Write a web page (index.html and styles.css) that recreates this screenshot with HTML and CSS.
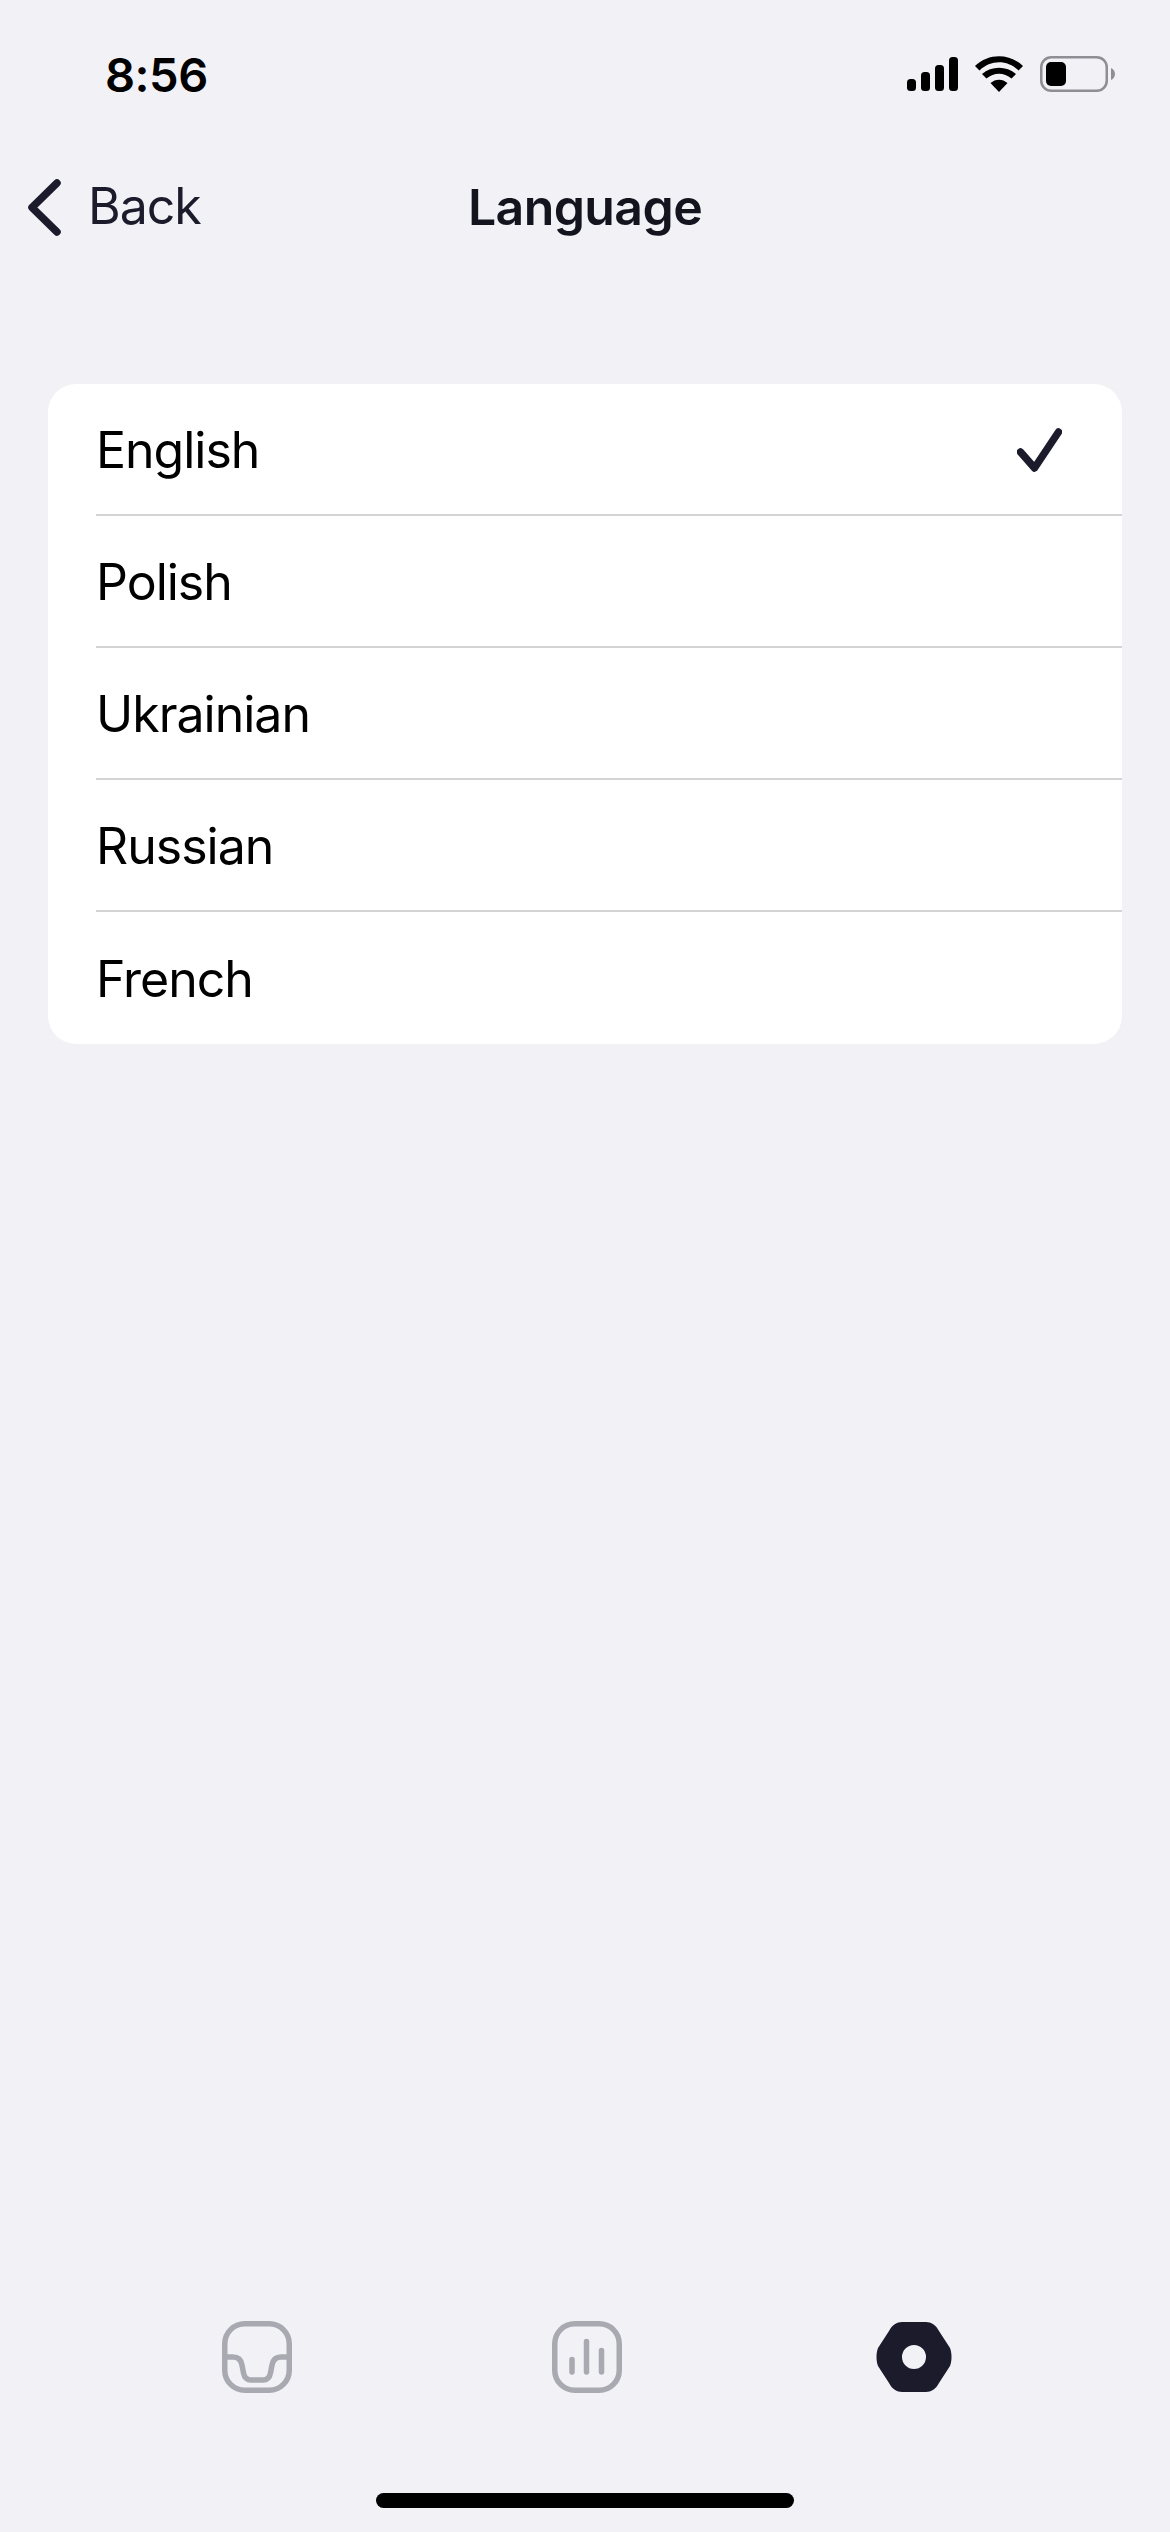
FILE: index.html
```html
<!DOCTYPE html>
<html lang="en">

<head>
    <meta charset="UTF-8" />
    <meta name="viewport" content="width=device-width, initial-scale=1.0" />
    <title>Language</title>
    <link rel="stylesheet" href="styles.css">
</head>

<body>
    <div class="screen">
        <div class="status-bar">
            <span class="time">8:56</span>
            <div class="status-icons">
                <svg class="signal" width="51" height="34" viewBox="0 0 51 34">
                    <rect x="0" y="22" width="9" height="12" rx="3.500" />
                    <rect x="14" y="15" width="9" height="19" rx="3.500" />
                    <rect x="28" y="8" width="9" height="26" rx="3.500" />
                    <rect x="42" y="0" width="9" height="34" rx="3.500" />
                </svg>
                <svg class="wifi" width="48" height="36" viewBox="0 0 48 36">
                    <path d="M24 36 L15.500 27 C20.500 22.500 27.500 22.500 32.500 27 Z" />
                    <path d="M11.500 22.500 L7 18 C16.500 9.500 31.500 9.500 41 18 L36.500 22.500 C29 16 19 16 11.500 22.500 Z" />
                    <path d="M4.500 14.500 L0 10 C13.500 -3 34.500 -3 48 10 L43.500 14.500 C32.500 3.500 15.500 3.500 4.500 14.500 Z" />
                </svg>
                <svg class="battery" width="75" height="36" viewBox="0 0 75 36">
                    <rect x="1.250" y="1.250" width="65.500" height="33.500" rx="10" fill="none" stroke="#8e8e93" stroke-width="2.500" />
                    <rect x="6" y="6" width="20" height="24" rx="5" />
                    <path d="M71 12 C73.500 13 75 15.500 75 18 C75 20.500 73.500 23 71 24 Z" fill="#8e8e93" />
                </svg>
            </div>
        </div>

        <nav class="nav-bar">
            <a class="back" href="#">
                <svg width="33" height="57" viewBox="0 0 33 57">
                    <path d="M29 4 L4 28.500 L29 53" fill="none" stroke="#1b1b2b" stroke-width="7.500" stroke-linecap="round" stroke-linejoin="round" />
                </svg>
                <span>Back</span>
            </a>
            <h1>Language</h1>
        </nav>

        <ul class="lang-list">
            <li class="lang-row">
                <span>English</span>
                <svg class="check" width="45" height="44" viewBox="0 0 45 44">
                    <path d="M3.500 24 L17.500 40 L41.500 4" fill="none" stroke="#1b1b2b" stroke-width="7.500" stroke-linecap="round" stroke-linejoin="round" />
                </svg>
            </li>
            <li class="lang-row"><span>Polish</span></li>
            <li class="lang-row"><span>Ukrainian</span></li>
            <li class="lang-row"><span>Russian</span></li>
            <li class="lang-row"><span>French</span></li>
        </ul>

        <div class="tab-bar">
            <a class="tab" href="#">
                <svg width="76" height="72" viewBox="0 0 76 72" fill="none" stroke="#a9a9b2" stroke-width="5.500">
                    <rect x="5.750" y="2.750" width="64.500" height="66.500" rx="20" />
                    <path d="M5.500 36 H14 C19 36 22 38.500 23 44 L24.500 52 C25.500 57 28 59 32 59 H44 C48 59 50.500 57 51.500 52 L53 44 C54 38.500 57 36 62 36 H70.500" />
                </svg>
            </a>
            <a class="tab" href="#">
                <svg width="76" height="72" viewBox="0 0 76 72" fill="none" stroke="#a9a9b2" stroke-width="5.500" stroke-linecap="round">
                    <rect x="5.750" y="2.750" width="64.500" height="66.500" rx="20" />
                    <path d="M23 38.500 V51 M37.500 20.500 V51 M52.500 29.500 V51" />
                </svg>
            </a>
            <a class="tab tab-active" href="#">
                <svg width="76" height="72" viewBox="0 0 76 72">
                    <path fill="#1b1b2b" fill-rule="evenodd" d="M26 1 H50 C55 1 60 4 63 10 L74 27 C76 32 76 40 74 45 L63 62 C60 68 55 71 50 71 H26 C21 71 16 68 13 62 L2 45 C0 40 0 32 2 27 L13 10 C16 4 21 1 26 1 Z M38 24 A12 12 0 1 0 38 48 A12 12 0 1 0 38 24 Z" />
                </svg>
            </a>
        </div>

        <div class="home-bar"></div>
    </div>
</body>

</html>
```

FILE: styles.css
```css
* {
    box-sizing: border-box;
}

body {
    font-family: Inter, 'Liberation Sans', sans-serif;
    margin: 0;
    padding: 0;
    background-color: #f1f1f6;
    color: #000;
}

a {
    color: inherit;
    text-decoration: none;
}

.screen {
    display: flex;
    flex-direction: column;
    height: 2532px;
    overflow: hidden;
}

/* status bar */
.status-bar {
    display: flex;
    justify-content: space-between;
    align-items: center;
    height: 56px;
    margin-top: 46px;
    padding: 0 55px 0 105px;
}

.time {
    font-size: 47px;
    font-weight: 600;
    letter-spacing: -0.5px;
}

.status-icons {
    display: flex;
    align-items: center;
}

.wifi {
    margin-left: 17px;
}

.battery {
    margin-left: 17px;
}

/* nav */
.nav-bar {
    display: grid;
    grid-template-columns: 1fr auto 1fr;
    align-items: center;
    height: 60px;
    margin-top: 74px;
}

.back {
    display: flex;
    align-items: center;
    gap: 27px;
    padding-left: 28px;
    font-size: 50px;
    letter-spacing: -1px;
    color: #1b1b2b;
}

.back span {
    margin-bottom: 2px;
}

.nav-bar h1 {
    margin: 0 0 1px;
    font-size: 50px;
    font-weight: 600;
    letter-spacing: -0.6px;
    color: #14141f;
}

/* list */
.lang-list {
    list-style: none;
    margin: 148px 48px 0;
    padding: 0 0 0 48px;
    background-color: #fff;
    border-radius: 28px;
}

.lang-row {
    display: flex;
    justify-content: space-between;
    align-items: center;
    height: 132px;
    padding-top: 2px;
    padding-right: 60px;
    border-bottom: 2px solid #d4d4d7;
    font-size: 50px;
    letter-spacing: -1px;
}

.lang-row:last-child {
    border-bottom: none;
}

/* tabs */
.tab-bar {
    display: flex;
    gap: 254px;
    margin-top: auto;
    padding-left: 219px;
}

.tab {
    display: block;
    height: 72px;
}

.tab svg {
    display: block;
}

.tab-active {
    margin-left: -3px;
}

.home-bar {
    width: 418px;
    height: 15px;
    margin: 100px auto 24px;
    background-color: #000;
    border-radius: 8px;
}
```
